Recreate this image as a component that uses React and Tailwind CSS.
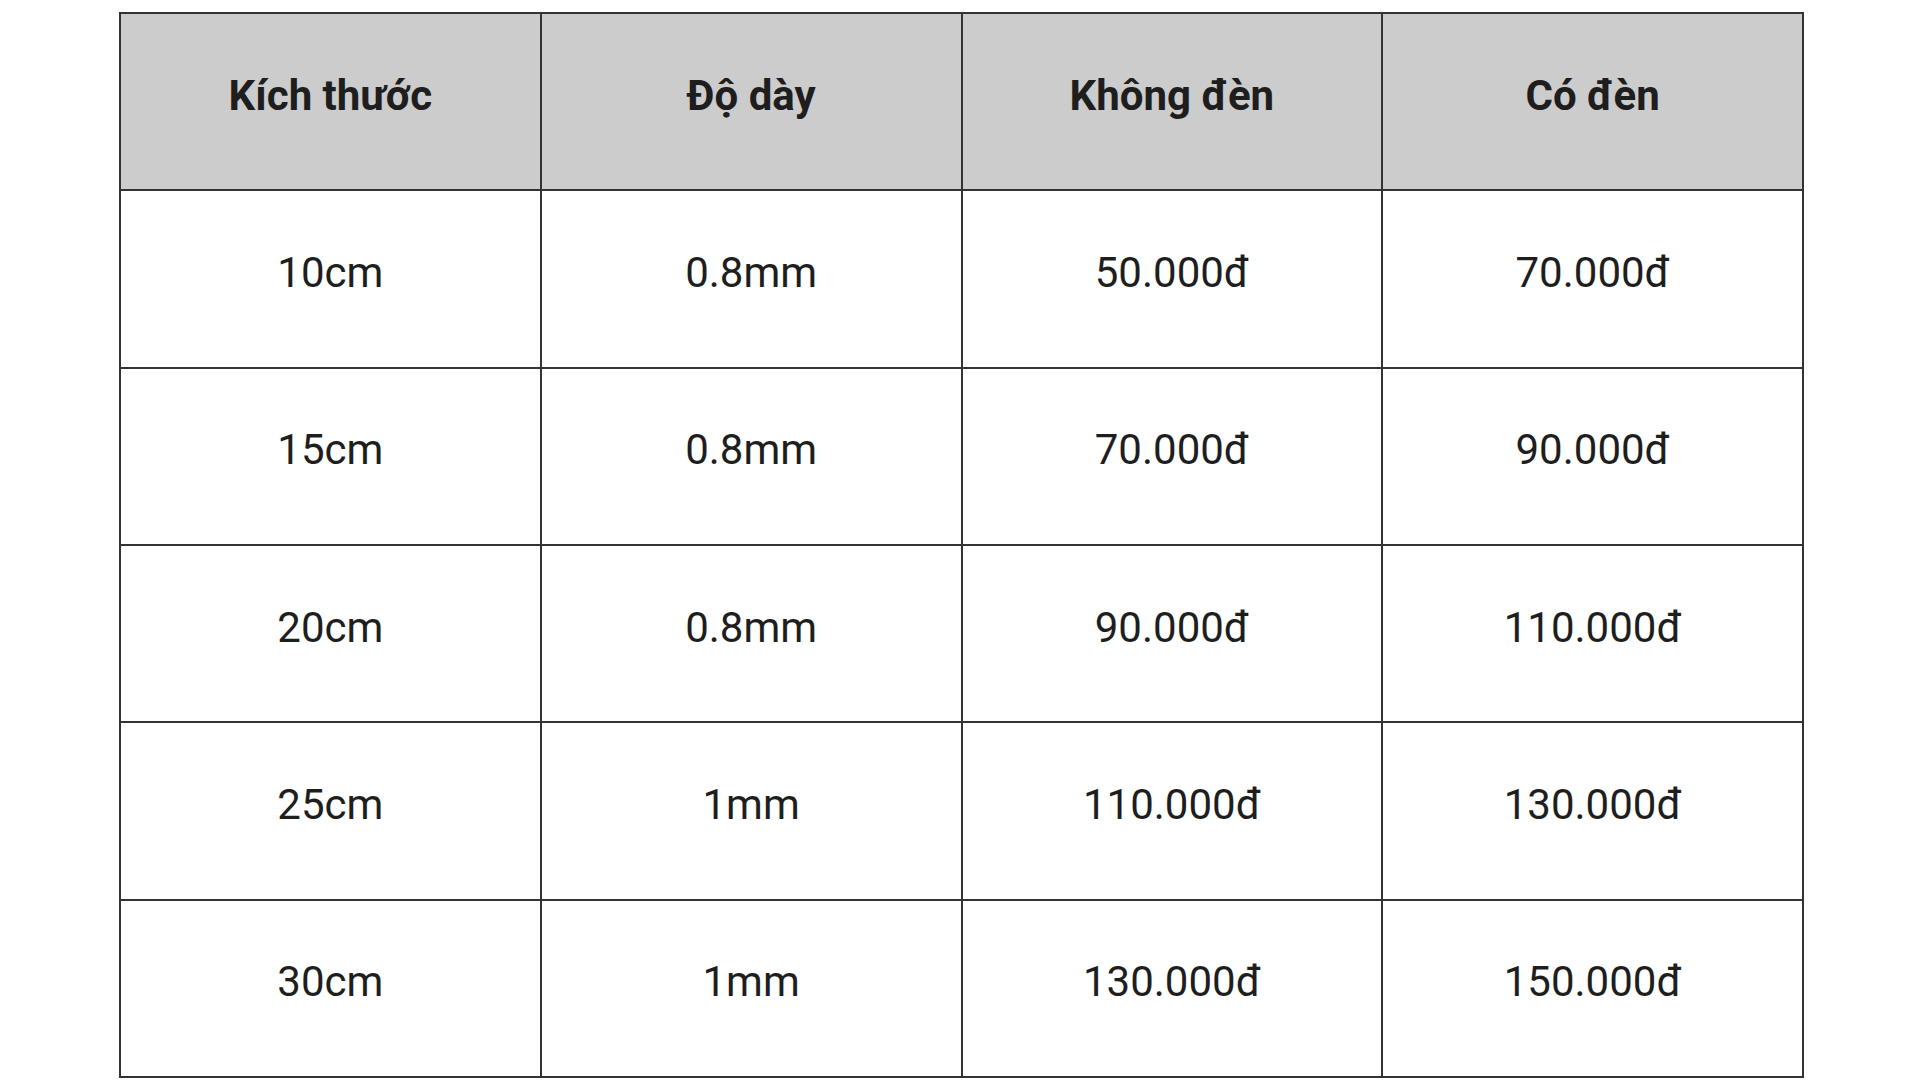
import React from "react";

const headers = ["Kích thước", "Độ dày", "Không đèn", "Có đèn"];
const rows = [
  ["10cm", "0.8mm", "50.000đ", "70.000đ"],
  ["15cm", "0.8mm", "70.000đ", "90.000đ"],
  ["20cm", "0.8mm", "90.000đ", "110.000đ"],
  ["25cm", "1mm", "110.000đ", "130.000đ"],
  ["30cm", "1mm", "130.000đ", "150.000đ"],
];

export default function App() {
  return (
    <div className="w-[1920px] h-[1080px] bg-white overflow-hidden font-['Roboto','Liberation_Sans',sans-serif] text-[#1e1e1e]">
      <div className="ml-[119px] mt-[12px] w-[1685px] grid grid-cols-4 border-l-2 border-t-2 border-[#333]">
        {headers.map((h) => (
          <div
            key={h}
            className="h-[177.33px] flex items-center justify-center bg-[#cccccc] border-r-2 border-b-2 border-[#333] text-[42px] font-bold pb-[13px]"
          >
            {h}
          </div>
        ))}
        {rows.map((r, i) =>
          r.map((c, j) => (
            <div
              key={i + "-" + j}
              className="h-[177.33px] flex items-center justify-center bg-white border-r-2 border-b-2 border-[#333] text-[42px] pb-[13px]"
            >
              {c}
            </div>
          ))
        )}
      </div>
    </div>
  );
}
